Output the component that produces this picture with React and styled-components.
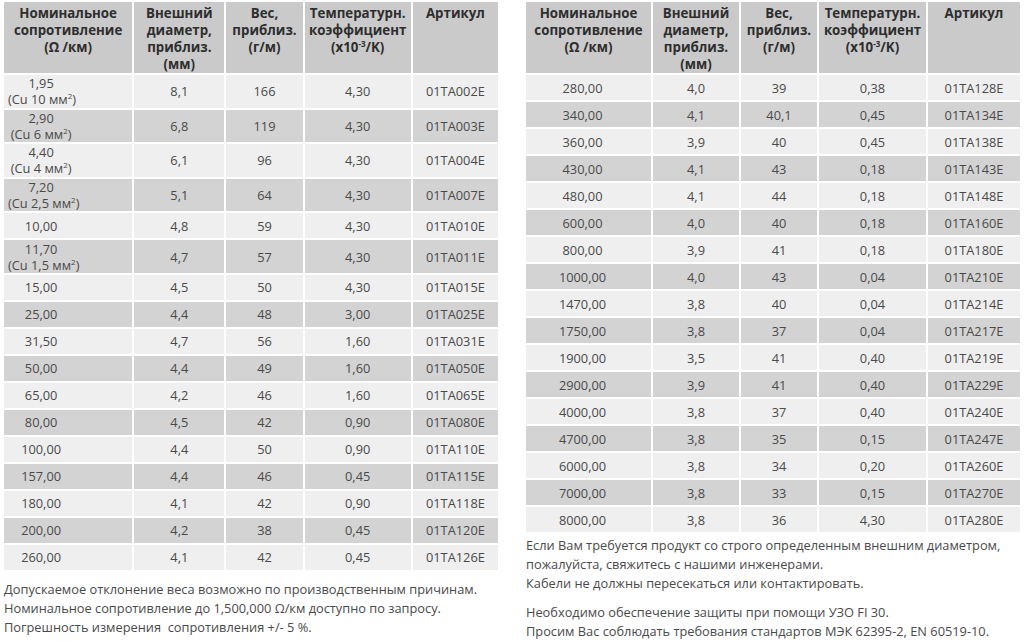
import React from "react";
import styled, { createGlobalStyle } from "styled-components";

const GlobalStyle = createGlobalStyle`
	html, body {
		margin: 0;
		padding: 0;
		background: #fff;
	}
	body {
		font-family: "Open Sans", "Noto Sans", sans-serif;
		color: #4a4a4a;
	}
`;

const leftRows = [
	["1,95", "Cu 10", "8,1", "166", "4,30", "01TA002E"],
	["2,90", "Cu 6", "6,8", "119", "4,30", "01TA003E"],
	["4,40", "Cu 4", "6,1", "96", "4,30", "01TA004E"],
	["7,20", "Cu 2,5", "5,1", "64", "4,30", "01TA007E"],
	["10,00", null, "4,8", "59", "4,30", "01TA010E"],
	["11,70", "Cu 1,5", "4,7", "57", "4,30", "01TA011E"],
	["15,00", null, "4,5", "50", "4,30", "01TA015E"],
	["25,00", null, "4,4", "48", "3,00", "01TA025E"],
	["31,50", null, "4,7", "56", "1,60", "01TA031E"],
	["50,00", null, "4,4", "49", "1,60", "01TA050E"],
	["65,00", null, "4,2", "46", "1,60", "01TA065E"],
	["80,00", null, "4,5", "42", "0,90", "01TA080E"],
	["100,00", null, "4,4", "50", "0,90", "01TA110E"],
	["157,00", null, "4,4", "46", "0,45", "01TA115E"],
	["180,00", null, "4,1", "42", "0,90", "01TA118E"],
	["200,00", null, "4,2", "38", "0,45", "01TA120E"],
	["260,00", null, "4,1", "42", "0,45", "01TA126E"],
];

const rightRows = [
	["280,00", "4,0", "39", "0,38", "01TA128E"],
	["340,00", "4,1", "40,1", "0,45", "01TA134E"],
	["360,00", "3,9", "40", "0,45", "01TA138E"],
	["430,00", "4,1", "43", "0,18", "01TA143E"],
	["480,00", "4,1", "44", "0,18", "01TA148E"],
	["600,00", "4,0", "40", "0,18", "01TA160E"],
	["800,00", "3,9", "41", "0,18", "01TA180E"],
	["1000,00", "4,0", "43", "0,04", "01TA210E"],
	["1470,00", "3,8", "40", "0,04", "01TA214E"],
	["1750,00", "3,8", "37", "0,04", "01TA217E"],
	["1900,00", "3,5", "41", "0,40", "01TA219E"],
	["2900,00", "3,9", "41", "0,40", "01TA229E"],
	["4000,00", "3,8", "37", "0,40", "01TA240E"],
	["4700,00", "3,8", "35", "0,15", "01TA247E"],
	["6000,00", "3,8", "34", "0,20", "01TA260E"],
	["7000,00", "3,8", "33", "0,15", "01TA270E"],
	["8000,00", "3,8", "36", "4,30", "01TA280E"],
];

const Header = ({ widths }) => (
	<>
		<colgroup>
			{widths.map((w, i) => (
				<col key={i} style={{ width: w }} />
			))}
		</colgroup>
		<thead>
			<tr>
				<Th>
					Номинальное
					<br />
					сопротивление
					<br />
					(Ω /км)
				</Th>
				<Th>
					Внешний
					<br />
					диаметр,
					<br />
					приблиз.
					<br />
					(мм)
				</Th>
				<Th>
					Вес,
					<br />
					приблиз.
					<br />
					(г/м)
				</Th>
				<Th>
					Температурн.
					<br />
					коэффициент
					<br />
					(x10<Sup>-3</Sup>/K)
				</Th>
				<Th>Артикул</Th>
			</tr>
		</thead>
	</>
);

const App = () => (
	<Page>
		<GlobalStyle />
		<Column>
			<Table>
				<Header widths={[129, 92, 78, 108, 86]} />
				<tbody>
					{leftRows.map((r, i) => (
						<Row key={i} dark={i % 2 === 1} tall={!!r[1]}>
							<FirstCell shift={58}>
								{r[0]}
								{r[1] && (
									<>
										<br />
										({r[1]} мм<Sup>2</Sup>)
									</>
								)}
							</FirstCell>
							<Td>{r[2]}</Td>
							<Td>{r[3]}</Td>
							<Td>{r[4]}</Td>
							<Td>{r[5]}</Td>
						</Row>
					))}
				</tbody>
			</Table>
			<Notes top={8}>
				<p>Допускаемое отклонение веса возможно по производственным причинам.</p>
				<p>Номинальное сопротивление до 1,500,000 Ω/км доступно по запросу.</p>
				<p>Погрешность измерения&nbsp; сопротивления +/- 5 %.</p>
			</Notes>
		</Column>
		<Column>
			<Table>
				<Header widths={[126, 88, 78, 109, 93]} />
				<tbody>
					{rightRows.map((r, i) => (
						<Row key={i} dark={i % 2 === 1}>
							<FirstCell shift={16}>{r[0]}</FirstCell>
							<Td>{r[1]}</Td>
							<Td>{r[2]}</Td>
							<Td>{r[3]}</Td>
							<Td>{r[4]}</Td>
						</Row>
					))}
				</tbody>
			</Table>
			<Notes top={2}>
				<p>Если Вам требуется продукт со строго определенным внешним диаметром,</p>
				<p>пожалуйста, свяжитесь с нашими инженерами.</p>
				<p>Кабели не должны пересекаться или контактировать.</p>
				<Gap />
				<p>Необходимо обеспечение защиты при помощи УЗО FI 30.</p>
				<p>Просим Вас соблюдать требования стандартов МЭК 62395-2, EN 60519-10.</p>
			</Notes>
		</Column>
	</Page>
);

export default App;

const Page = styled.div`
	display: flex;
	gap: 28px;
	padding: 2px 4px 0 4px;
	width: 1024px;
	box-sizing: border-box;
`;

const Column = styled.div`
	display: flex;
	flex-direction: column;
	width: 494px;
`;

const Table = styled.table`
	width: 100%;
	border-collapse: collapse;
	table-layout: fixed;
	font-size: 12.8px;
`;

const Th = styled.th`
	background: #cacaca;
	color: #2e2e2e;
	font-weight: 700;
	font-size: 13.3px;
	line-height: 17px;
	vertical-align: top;
	text-align: center;
	padding: 3px 0 0;
	border: 2px solid #fff;
	border-top: 0;
	white-space: nowrap;
	&:first-child {
		border-left: 0;
	}
	&:last-child {
		border-right: 0;
	}
`;

const Sup = styled.sup`
	font-size: 8px;
	line-height: 0;
	vertical-align: 5px;
`;

const Row = styled.tr`
	background: ${props => (props.dark ? "#d3d3d3" : "#efefef")};
	height: ${props => (props.tall ? "34.6px" : "27px")};
`;

const Td = styled.td`
	text-align: center;
	vertical-align: middle;
	line-height: 16px;
	padding: 0 2px;
	border: 2px solid #fff;
	&:last-child {
		border-right: 0;
	}
`;

const FirstCell = styled(Td)`
	border-left: 0;
	padding: 0 ${props => props.shift}px 0 4px;
	white-space: nowrap;
`;

const Notes = styled.div`
	margin-top: ${props => props.top}px;
	font-size: 12.8px;
	line-height: 19px;
	color: #4a4a4a;
	p {
		margin: 0;
	}
`;

const Gap = styled.div`
	height: 10px;
`;
